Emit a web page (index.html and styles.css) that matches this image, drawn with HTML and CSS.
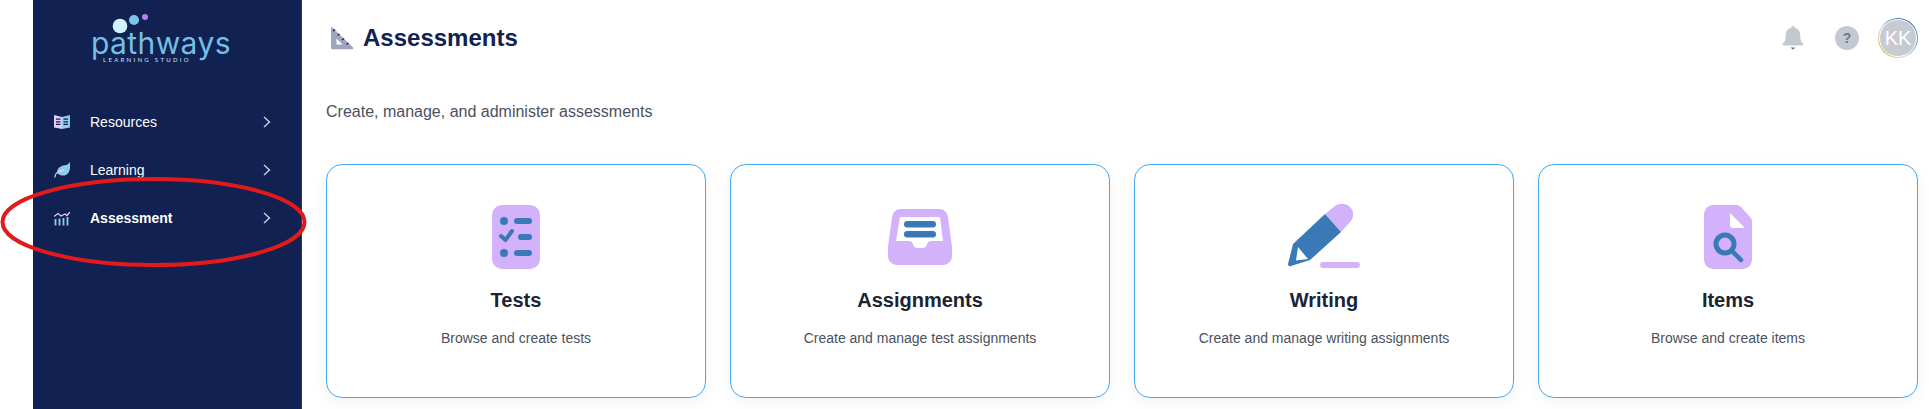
FILE: index.html
```html
<!DOCTYPE html>
<html lang="en">
<head>
  <meta charset="UTF-8">
  <title>Assessments</title>
  <link rel="stylesheet" href="styles.css">
</head>
<body>
<div class="app">
  <aside class="sidebar">
    <div class="logo">
      <svg class="logo-dots" width="60" height="30" viewBox="0 0 60 30">
        <circle cx="19" cy="19" r="7.300" fill="#d3f1fb"/>
        <circle cx="33" cy="13" r="5" fill="#7cc4e8"/>
        <circle cx="44" cy="10" r="3" fill="#b77ff0"/>
      </svg>
      <div class="logo-name">pathways</div>
      <div class="logo-sub">LEARNING STUDIO</div>
    </div>
    <nav class="nav">
      <a class="nav-item">
        <svg class="nav-icon" viewBox="0 0 16 16" width="16" height="16">
          <path d="M0 1l8 2v12L0 13.500Z" fill="#e3cdf8"/>
          <path d="M16 1L8 3v12l8-1.500Z" fill="#8fcbec"/>
          <path d="M2 5.200h4.500M2 7.800h4.500M2 10.400h4.500M9.500 5.200H14M9.500 7.800H14M9.500 10.400H14" stroke="#102152" stroke-width="1.200"/>
        </svg>
        <span class="nav-label">Resources</span>
        <svg class="chevron" viewBox="0 0 8 12" width="8" height="12"><path d="M1 1l5.500 5L1 11" fill="none" stroke="#d5d9e4" stroke-width="1.300"/></svg>
      </a>
      <a class="nav-item">
        <svg class="nav-icon" viewBox="0 0 16 16" width="16" height="16">
          <path d="M3 11C3 5 8 3.500 12 3c1.500-.2 3-1.500 4-3 .5 6 0 11-4 13-3 1.300-6 .5-9-2Z" fill="#8fcbec"/>
          <path d="M.7 15.500C1 11 5 8.500 10 8.500" fill="none" stroke="#e3cdf8" stroke-width="1.300"/>
        </svg>
        <span class="nav-label">Learning</span>
        <svg class="chevron" viewBox="0 0 8 12" width="8" height="12"><path d="M1 1l5.500 5L1 11" fill="none" stroke="#d5d9e4" stroke-width="1.300"/></svg>
      </a>
      <a class="nav-item active">
        <svg class="nav-icon" viewBox="0 0 16 16" width="16" height="16">
          <path d="M0 6.500l4-3 3 2.500 4-2 2 1.500 3-3.500" fill="none" stroke="#e3cdf8" stroke-width="1.300"/>
          <path d="M1.500 9v6.500M5.500 8.500v7M9.500 8v7.500M13.500 7v8.500" stroke="#8fcbec" stroke-width="1.800"/>
        </svg>
        <span class="nav-label">Assessment</span>
        <svg class="chevron" viewBox="0 0 8 12" width="8" height="12"><path d="M1 1l5.500 5L1 11" fill="none" stroke="#d5d9e4" stroke-width="1.300"/></svg>
      </a>
    </nav>
  </aside>

  <main class="main">
    <header class="topbar">
      <div class="title-wrap">
        <svg class="title-icon" viewBox="0 0 24 24" width="24" height="24">
          <path d="M1 2.500c0-1 .9-1.500 1.700-.8L23 21.500c.7.700.3 1.700-.7 1.700H2.500C1.600 23.200 1 22.600 1 21.700Z" fill="#9ea5bd"/>
          <path d="M6.500 12.500l6 6h-6Z" fill="#fff"/>
          <path d="M3 5l2-1.500M7.500 9.500l2-1.500M12 14l2-1.500M16.500 18.500l2-1.500" stroke="#102152" stroke-width="1.300"/>
        </svg>
        <h1 class="page-title">Assessments</h1>
      </div>
      <div class="top-actions">
        <svg class="bell" viewBox="0 0 22 24" width="22" height="24">
          <path d="M11 0c1 0 1.600.7 1.700 1.700C16.500 2.600 18.200 5.500 18.200 9.500c0 4 .8 6 2.900 8 .8.800.4 2-.8 2H1.700c-1.200 0-1.600-1.200-.8-2 2.100-2 2.900-4 2.900-8 0-4 1.700-6.900 5.500-7.800C9.400.7 10 0 11 0Z" fill="#c4c9d1"/>
          <path d="M8.500 21.500h5L11 23.800Z" fill="#6d7786"/>
        </svg>
        <div class="help">?</div>
        <div class="avatar-ring"><div class="avatar">KK</div></div>
      </div>
    </header>

    <p class="intro">Create, manage, and administer assessments</p>

    <section class="cards">
      <div class="card">
        <div class="card-icon">
          <svg viewBox="0 0 48 64" width="48" height="64">
            <rect width="48" height="64" rx="10" fill="#d4b1fb"/>
            <g fill="#397ab6">
              <circle cx="12" cy="16" r="4"/>
              <rect x="22" y="13" width="18" height="6" rx="3"/>
              <rect x="26" y="29" width="14" height="6" rx="3"/>
              <circle cx="12" cy="48" r="4"/>
              <rect x="22" y="45" width="18" height="6" rx="3"/>
            </g>
            <path d="M9 31l4.500 4L20 26" fill="none" stroke="#397ab6" stroke-width="4" stroke-linecap="round" stroke-linejoin="round"/>
          </svg>
        </div>
        <h2 class="card-title">Tests</h2>
        <p class="card-text">Browse and create tests</p>
      </div>
      <div class="card">
        <div class="card-icon">
          <svg viewBox="0 0 64 56" width="64" height="56">
            <path d="M13 0h38c5 0 8 3 9 8l4 30v9c0 5-4 9-9 9H9c-5 0-9-4-9-9v-9L4 8c1-5 4-8 9-8Z" fill="#d4b1fb"/>
            <path d="M12 8h40l3 24H43c-2 0-3 1-4 3-1 3-2 4-5 4h-4c-3 0-4-1-5-4-1-2-2-3-4-3H8Z" fill="#fff"/>
            <rect x="16" y="12" width="32" height="6.500" rx="3.200" fill="#397ab6"/>
            <rect x="16" y="22" width="32" height="6.500" rx="3.200" fill="#397ab6"/>
          </svg>
        </div>
        <h2 class="card-title">Assignments</h2>
        <p class="card-text">Create and manage test assignments</p>
      </div>
      <div class="card">
        <div class="card-icon">
          <svg viewBox="0 0 72 66" width="72" height="66">
            <path d="M37 10L47 2c4-3 10-3 14 0l1 1c4 4 4 9 1 14L53 28Z" fill="#d4b1fb"/>
            <path d="M37 10L53 28 22 56 3 62c-2 1-3-1-3-2L5 40Z" fill="#397ab6"/>
            <path d="M10 43l10 12-12 1.500Z" fill="#fff"/>
            <rect x="32" y="58" width="40" height="6" rx="3" fill="#d4b1fb"/>
          </svg>
        </div>
        <h2 class="card-title">Writing</h2>
        <p class="card-text">Create and manage writing assignments</p>
      </div>
      <div class="card">
        <div class="card-icon">
          <svg viewBox="0 0 48 64" width="48" height="64">
            <path d="M10 0h22c2 0 3 .5 5 2l9 10c1.500 1.700 2 3 2 5v37c0 6-4 10-10 10H10C4 64 0 60 0 54V10C0 4 4 0 10 0Z" fill="#d4b1fb"/>
            <path d="M26 8l14 14c.5.500 .2 1-.5 1H29c-2 0-3-1-3-3Z" fill="#fff"/>
            <circle cx="21" cy="39" r="9" fill="none" stroke="#397ab6" stroke-width="5"/>
            <path d="M28 46l9 9" stroke="#397ab6" stroke-width="4.500" stroke-linecap="round"/>
          </svg>
        </div>
        <h2 class="card-title">Items</h2>
        <p class="card-text">Browse and create items</p>
      </div>
    </section>
  </main>
</div>

<svg class="callout" viewBox="0 0 308 92" width="308" height="92">
  <ellipse cx="153.500" cy="46" rx="151" ry="43" fill="none" stroke="#e31a1c" stroke-width="4"/>
</svg>
</body>
</html>
```

FILE: styles.css
```css
* { box-sizing: border-box; }
html, body { margin: 0; height: 100%; }
body {
  position: relative;
  font-family: "Liberation Sans", Arial, sans-serif;
  background: #fff;
  overflow: hidden;
}
.app { display: flex; height: 409px; padding-left: 33px; }

/* sidebar */
.sidebar {
  width: 269px;
  flex-shrink: 0;
  background: #102152;
  border-right: 1px solid #2a3a68;
}
.logo {
  height: 97px;
  padding-left: 58px;
  padding-top: 30px;
  position: relative;
  color: #74bfe4;
}
.logo-dots { position: absolute; left: 68px; top: 7px; }
.logo-name {
  font-family: Inter, sans-serif;
  font-weight: 400;
  font-size: 30px;
  line-height: 26px;
  letter-spacing: .4px;
}
.logo-sub {
  padding-left: 12px;
  margin-top: 1px;
  font-family: Lato, sans-serif;
  font-size: 6px;
  line-height: 6px;
  letter-spacing: 2.300px;
  color: #d3e8f5;
}
.nav { padding-top: 1px; }
.nav-item {
  display: flex;
  align-items: center;
  height: 48px;
  padding-left: 21px;
  color: #fff;
  font-size: 14px;
}
.nav-icon { flex-shrink: 0; margin-right: 20px; }
.nav-label { flex: 1; }
.nav-item.active .nav-label { font-weight: 700; }
.chevron { margin-right: 30px; }

/* main area */
.main { flex: 1; padding: 0 11px 0 24px; min-width: 0; }
.topbar {
  display: flex;
  justify-content: space-between;
  align-items: center;
  height: 76px;
}
.title-wrap { display: flex; align-items: center; gap: 9px; padding-left: 4px; }
.page-title {
  margin: 0;
  font-size: 24px;
  font-weight: 700;
  color: #102152;
}
.top-actions { display: flex; align-items: center; }
.bell { margin-right: 31px; }
.help {
  width: 24px;
  height: 24px;
  border-radius: 50%;
  background: #c4c9d1;
  color: #6d7786;
  font-size: 14px;
  font-weight: 700;
  line-height: 24px;
  text-align: center;
  margin-right: 19px;
}
.avatar-ring {
  width: 40px;
  height: 40px;
  padding: 1px;
  border-radius: 50%;
  background: conic-gradient(#2f74b5, #7fa8c9 30%, #d8dce2 45%, #e2b441 65%, #d8dce2 85%, #2f74b5);
}
.avatar {
  width: 100%;
  height: 100%;
  border: 1px solid #fff;
  border-radius: 50%;
  background: #c6cbd3;
  color: #fff;
  font-size: 20px;
  line-height: 36px;
  text-align: center;
}
.intro {
  margin: 0;
  padding-top: 26px;
  font-size: 16px;
  line-height: 20px;
  color: #4a5160;
}

/* cards */
.cards {
  display: grid;
  grid-template-columns: repeat(4, 1fr);
  gap: 24px;
  margin-top: 42px;
}
.card {
  height: 234px;
  padding-top: 36px;
  text-align: center;
  background: #fff;
  border: 1px solid #42aaf0;
  border-radius: 16px;
  box-shadow: 0 4px 16px rgba(0, 0, 0, .05);
}
.card-icon {
  display: flex;
  align-items: center;
  justify-content: center;
  height: 72px;
}
.card-title {
  margin: 15px 0 0;
  font-size: 20px;
  line-height: 24px;
  font-weight: 700;
  color: #1c2333;
}
.card-text {
  margin: 16px 0 0;
  font-size: 14px;
  line-height: 20px;
  color: #4a5160;
}

/* red annotation drawn over the page */
.callout { position: absolute; left: 0; top: 176px; }
```
